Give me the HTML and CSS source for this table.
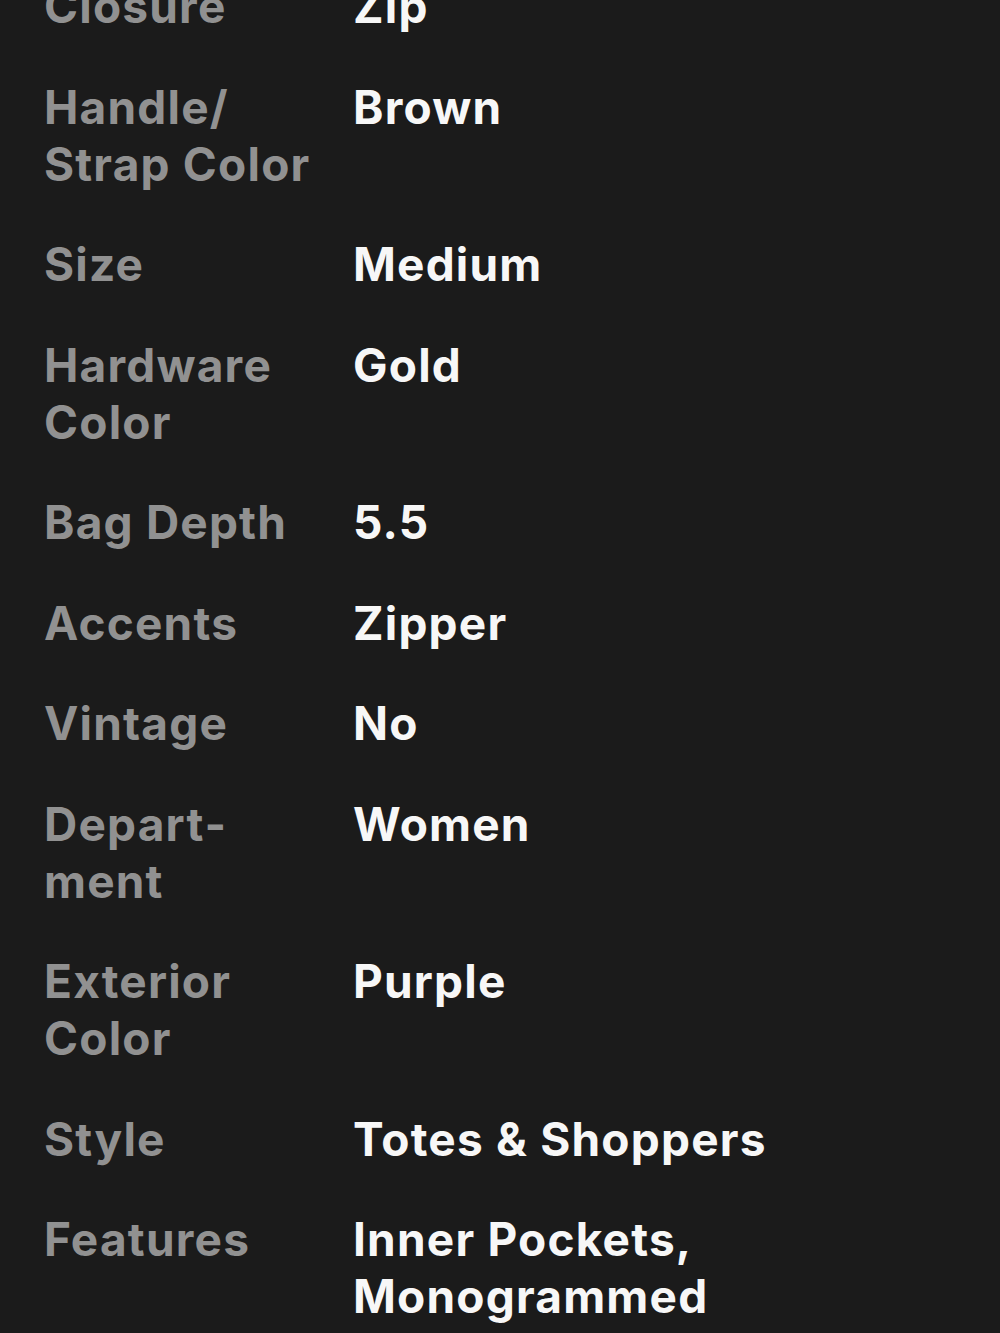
FILE: index.html
```html
<!DOCTYPE html>
<html lang="en">
<head>
    <meta charset="UTF-8">
    <meta name="viewport" content="width=device-width, initial-scale=1.0">
    <title>Item Specifics</title>
    <link rel="stylesheet" href="styles.css">
</head>
<body>
    <div class="container">
        <dl class="specs">
            <dt class="spec-label">Closure</dt>
            <dd class="spec-value">Zip</dd>

            <dt class="spec-label">Handle/ Strap Color</dt>
            <dd class="spec-value">Brown</dd>

            <dt class="spec-label">Size</dt>
            <dd class="spec-value">Medium</dd>

            <dt class="spec-label">Hardware Color</dt>
            <dd class="spec-value">Gold</dd>

            <dt class="spec-label">Bag Depth</dt>
            <dd class="spec-value">5.5</dd>

            <dt class="spec-label">Accents</dt>
            <dd class="spec-value">Zipper</dd>

            <dt class="spec-label">Vintage</dt>
            <dd class="spec-value">No</dd>

            <dt class="spec-label">Depart&shy;ment</dt>
            <dd class="spec-value">Women</dd>

            <dt class="spec-label">Exterior Color</dt>
            <dd class="spec-value">Purple</dd>

            <dt class="spec-label">Style</dt>
            <dd class="spec-value">Totes &amp; Shoppers</dd>

            <dt class="spec-label">Features</dt>
            <dd class="spec-value">Inner Pockets, Monogrammed</dd>
        </dl>
    </div>
</body>
</html>
```

FILE: styles.css
```css
html, body {
    margin: 0;
    padding: 0;
    background-color: #1b1b1b;
}
.container {
    padding: 0 44px;
    font-family: Inter, "Liberation Sans", Arial, sans-serif;
    overflow: hidden;
    height: 1333px;
}
.specs {
    display: grid;
    grid-template-columns: 273px 1fr;
    column-gap: 36px;
    row-gap: 43.5px;
    margin: -22px 0 0 0;
    font-size: 46px;
    font-weight: 700;
    letter-spacing: 1.2px;
    line-height: 57px;
}
.spec-label {
    color: #919191;
    margin: 0;
}
.spec-value {
    color: #f7f7f7;
    margin: 0;
}
```
